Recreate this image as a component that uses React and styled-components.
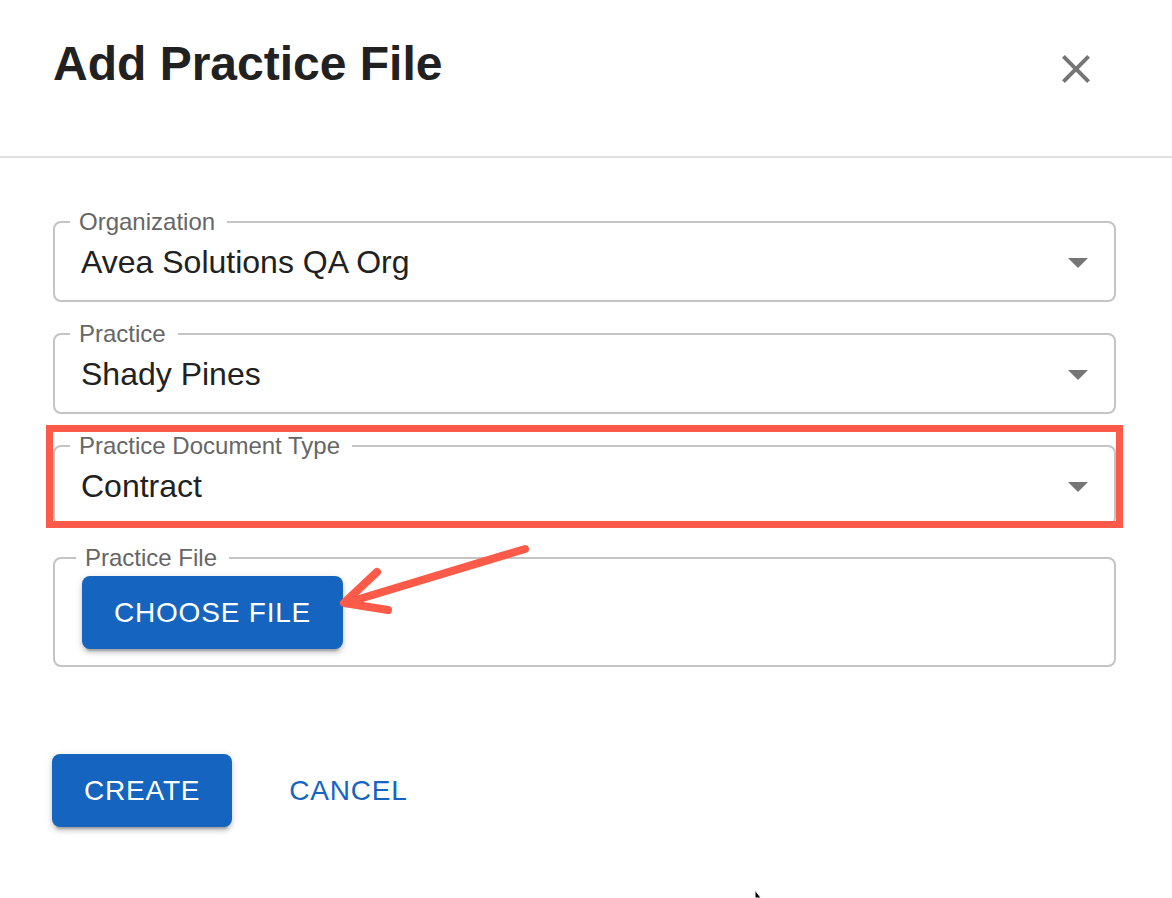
import styled, { createGlobalStyle } from 'styled-components';

const GlobalStyle = createGlobalStyle`
  html, body {
    margin: 0;
    padding: 0;
    background: #ffffff;
  }
  body {
    font-family: "Liberation Sans", Arial, Helvetica, sans-serif;
    color: #212121;
  }
  * { box-sizing: border-box; }
`;

const Dialog = styled.div`
  position: relative;
  width: 1172px;
  height: 898px;
  overflow: hidden;
  background: #fff;
`;

const Header = styled.div`
  display: flex;
  justify-content: space-between;
  align-items: flex-start;
  height: 158px;
  padding: 35px 72px 0 53px;
  border-bottom: 2px solid #e0e0e0;
`;

const Title = styled.h2`
  margin: 0;
  font-size: 48px;
  line-height: 57.6px;
  font-weight: 700;
  color: #212121;
`;

const CloseButton = styled.button`
  width: 48px;
  height: 48px;
  margin-top: 10px;
  padding: 0;
  border: none;
  background: none;
  color: #757575;
  cursor: pointer;
  display: flex;
  align-items: center;
  justify-content: center;
`;

const Body = styled.div`
  display: flex;
  flex-direction: column;
  gap: 20px;
  padding: 52px 56px 0 53px;
`;

const Field = styled.fieldset`
  margin: 0;
  padding: 0;
  min-width: 0;
  border: 2px solid #c4c4c4;
  border-radius: 8px;
`;

const Legend = styled.legend`
  margin-left: ${p => p.$offset}px;
  padding: 0 12px 0 9px;
  font-size: 24px;
  line-height: 24px;
  color: #666666;
`;

const Row = styled.div`
  display: flex;
  align-items: center;
  height: 46px;
  padding: 5px 12px 15px 26px;
  box-sizing: content-box;
`;

const FileRow = styled.div`
  display: flex;
  align-items: center;
  padding: 6px 12px 16px 27px;
`;

const Value = styled.div`
  flex: 1;
  font-size: 32px;
  line-height: 46px;
  color: #212121;
`;

const Highlighted = styled.div`
  position: relative;
`;

const Highlight = styled.div`
  position: absolute;
  top: -9px;
  left: -7px;
  right: -7px;
  bottom: -2px;
  border: 7px solid #fe5a4a;
  pointer-events: none;
`;

const Button = styled.button`
  font-family: inherit;
  font-size: 28px;
  font-weight: 400;
  line-height: 49px;
  letter-spacing: 0.8px;
  text-transform: uppercase;
  padding: 12px ${p => (p.$text ? 16 : 32)}px;
  border: none;
  border-radius: 8px;
  cursor: pointer;
  color: ${p => (p.$text ? '#1565c0' : '#ffffff')};
  background: ${p => (p.$text ? 'transparent' : '#1565c0')};
  box-shadow: ${p =>
    p.$text
      ? 'none'
      : '0 6px 2px -4px rgba(0,0,0,0.2), 0 4px 4px 0 rgba(0,0,0,0.14), 0 2px 10px 0 rgba(0,0,0,0.12)'};
`;

const Actions = styled.div`
  display: flex;
  align-items: center;
  gap: 41px;
  padding: 87px 0 0 52px;
`;

const Overlay = styled.svg`
  position: absolute;
  top: 0;
  left: 0;
  pointer-events: none;
`;

const DropIcon = () => (
  <svg width="48" height="48" viewBox="0 0 24 24" fill="#757575">
    <path d="M7 10l5 5 5-5z" />
  </svg>
);

const SelectField = ({ label, value }) => (
  <Field>
    <Legend $offset={15}>{label}</Legend>
    <Row>
      <Value>{value}</Value>
      <DropIcon />
    </Row>
  </Field>
);

export default function App() {
  return (
    <>
      <GlobalStyle />
      <Dialog>
        <Header>
          <Title>Add Practice File</Title>
          <CloseButton aria-label="close">
            <svg width="48" height="48" viewBox="0 0 24 24" fill="currentColor">
              <path d="M19 6.41 17.59 5 12 10.59 6.41 5 5 6.41 10.59 12 5 17.59 6.41 19 12 13.41 17.59 19 19 17.59 13.41 12z" />
            </svg>
          </CloseButton>
        </Header>

        <Body>
          <SelectField label="Organization" value="Avea Solutions QA Org" />
          <SelectField label="Practice" value="Shady Pines" />
          <Highlighted>
            <SelectField label="Practice Document Type" value="Contract" />
            <Highlight />
          </Highlighted>
          <Field>
            <Legend $offset={21}>Practice File</Legend>
            <FileRow>
              <Button>Choose File</Button>
            </FileRow>
          </Field>
        </Body>

        <Actions>
          <Button>Create</Button>
          <Button $text>Cancel</Button>
        </Actions>

        <Overlay width="1172" height="898" viewBox="0 0 1172 898">
          <g stroke="#fe5a4a" strokeWidth="8" strokeLinecap="round" strokeLinejoin="round" fill="none">
            <path d="M525 549 L346 603" />
            <path d="M377 572 L344 603 L388 610" />
          </g>
          <path d="M755 890 L755 898 L761 898 Z" fill="#000" stroke="#fff" strokeWidth="1" />
        </Overlay>
      </Dialog>
    </>
  );
}
